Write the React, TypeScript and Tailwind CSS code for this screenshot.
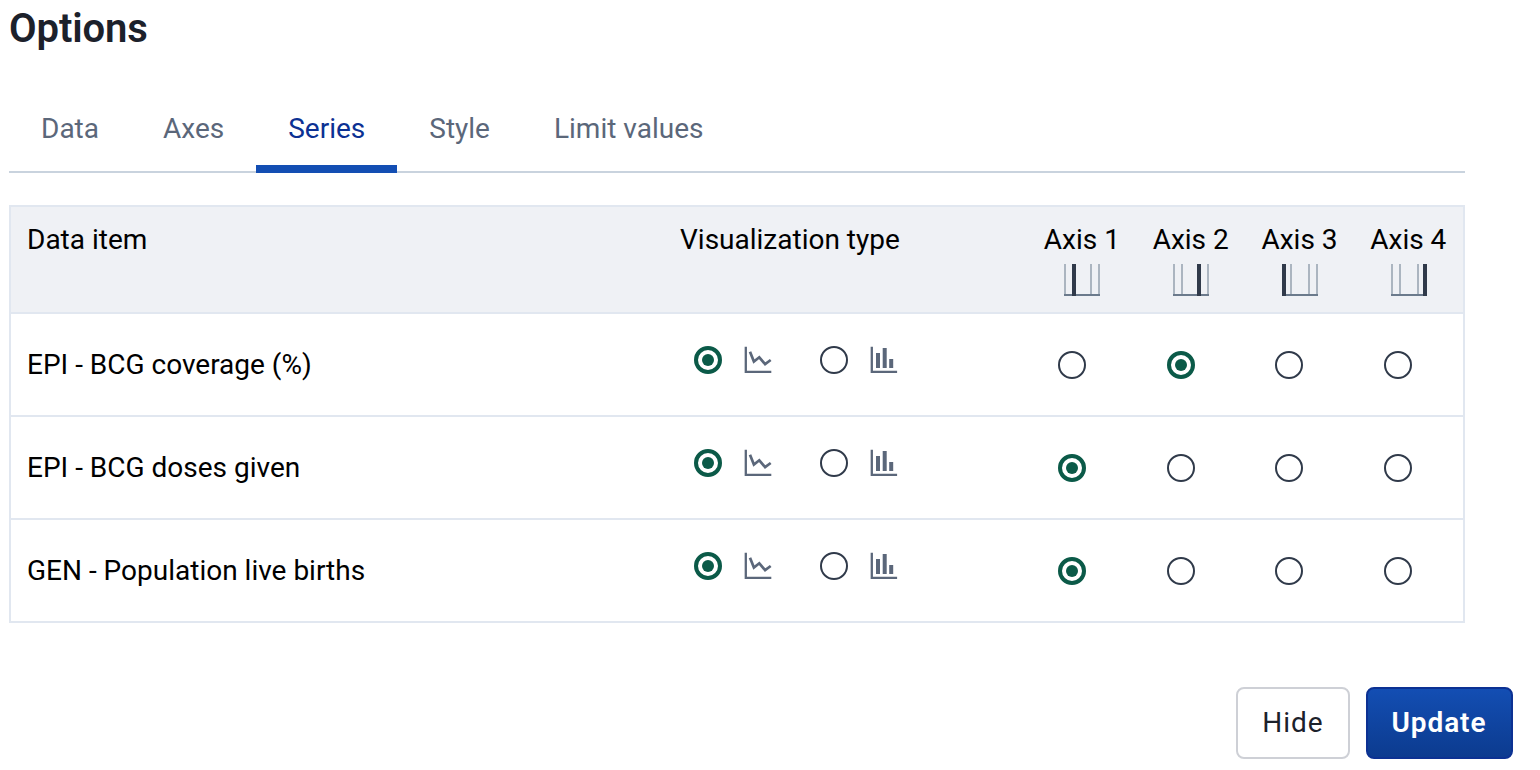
const TABS = ["Data", "Axes", "Series", "Style", "Limit values"];

const AXES = [
  { label: "Axis 1", bold: 8, thin: [0, 26, 34] },
  { label: "Axis 2", bold: 24, thin: [0, 8, 34] },
  { label: "Axis 3", bold: 0, thin: [8, 26, 34] },
  { label: "Axis 4", bold: 32, thin: [0, 8, 26] },
];

const ITEMS = [
  { name: "EPI - BCG coverage (%)", axis: 1 },
  { name: "EPI - BCG doses given", axis: 0 },
  { name: "GEN - Population live births", axis: 0 },
];

function Radio({ checked = false }: { checked?: boolean }) {
  return (
    <svg className="block size-7 shrink-0" viewBox="0 0 28 28" fill="none">
      {checked ? (
        <>
          <circle cx="14" cy="14" r="12" stroke="#0b5a48" strokeWidth="4" />
          <circle cx="14" cy="14" r="6" fill="#0b5a48" />
        </>
      ) : (
        <circle cx="14" cy="14" r="13" stroke="#303a4a" strokeWidth="2" />
      )}
    </svg>
  );
}

function LineIcon() {
  return (
    <svg className="block size-7 shrink-0" viewBox="0 0 28 28" fill="none" stroke="#5b677a">
      <path d="M1.8 0.7v25.2h25.5" strokeWidth="2.3" />
      <path d="M6 5.8L9.9 15.6l5.4-4.3 5.8 6.8 5.6-4.1" strokeWidth="2.7" />
    </svg>
  );
}

function BarIcon() {
  return (
    <svg className="block size-7 shrink-0" viewBox="0 0 28 28" fill="none" stroke="#5b677a">
      <path d="M1.8 0.7v25.2h25.3" strokeWidth="2.3" />
      <path d="M8 7v15M14.7 2v20M21.2 13v9" strokeWidth="4" />
    </svg>
  );
}

function AxisIcon({ bold, thin }: { bold: number; thin: number[] }) {
  return (
    <svg className="block h-8 w-9" viewBox="0 0 36 32">
      {thin.map((x) => (
        <rect key={x} x={x} y="0" width="2" height="30" fill="#abb5c0" />
      ))}
      <rect x="0" y="30" width="36" height="2" fill="#6b7a8c" />
      <rect x={bold} y="0" width="4" height="32" fill="#303a4a" />
    </svg>
  );
}

export default function App() {
  return (
    <main className="h-[770px] w-[1540px] overflow-hidden bg-white pl-[9px] font-['Roboto',sans-serif] text-[28px] leading-8 text-black">
      <h1 className="pt-[5px] text-[40px] leading-[48px] font-semibold tracking-[-0.1px] text-[#1c212b]">Options</h1>

      <nav className="mt-8 flex h-[88px] w-[1456px] border-b-2 border-[#c9d3de] text-[#5b677a]">
        {TABS.map((tab) => (
          <button
            key={tab}
            className={
              tab === "Series"
                ? "-mb-0.5 flex h-[88px] items-start border-b-8 border-[#134eb3] px-8 pt-7 text-[#0c3193]"
                : "flex items-start px-8 pt-7"
            }
          >
            {tab}
          </button>
        ))}
      </nav>

      <section className="mt-8 w-[1456px] border-2 border-[#e1e7f0]">
        <div className="flex h-[105px] bg-[#eff1f5] pt-[17px]">
          <div className="w-[669px] shrink-0 pl-4">Data item</div>
          <div className="w-[347px] shrink-0">Visualization type</div>
          {AXES.map((axis) => (
            <div key={axis.label} className="flex w-[108.8px] shrink-0 flex-col items-center">
              <span className="pl-px whitespace-nowrap">{axis.label}</span>
              <div className="mt-2 pl-0.5">
                <AxisIcon bold={axis.bold} thin={axis.thin} />
              </div>
            </div>
          ))}
        </div>
        {ITEMS.map((item) => (
          <div key={item.name} className="flex h-[103px] border-t-2 border-[#e1e7f0]">
            <div className="w-[669px] shrink-0 pt-[35px] pl-4">{item.name}</div>
            <div className="flex w-[347px] shrink-0 pt-8 pl-3.5">
              <Radio checked />
              <div className="ml-[22px]"><LineIcon /></div>
              <div className="ml-12"><Radio /></div>
              <div className="ml-[22px]"><BarIcon /></div>
            </div>
            {AXES.map((axis, i) => (
              <div key={axis.label} className="w-[108.7px] shrink-0 pt-[37px] pl-[31px]">
                <Radio checked={item.axis === i} />
              </div>
            ))}
          </div>
        ))}
      </section>

      <footer className="mt-16 flex justify-end gap-4 pr-[27px] tracking-[1px]">
        <button className="h-[72px] w-[114px] rounded-lg border-2 border-[#ced0d6] text-[#1c212b]">Hide</button>
        <button className="h-[72px] w-[147px] rounded-lg border-2 border-[#0c3193] bg-linear-to-b from-[#134eb3] to-[#0c3b8f] pr-px font-semibold tracking-[0.9px] text-white">Update</button>
      </footer>
    </main>
  );
}
